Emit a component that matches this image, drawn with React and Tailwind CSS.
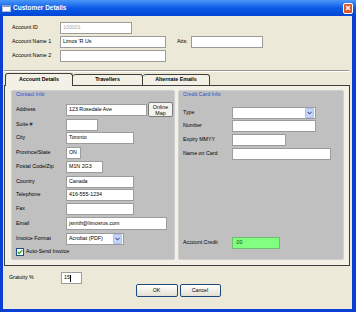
import React from 'react';

function Input({ w, value, muted, className = '' }) {
  return (
    <div className={`h-[12px] shrink-0 bg-white border border-[#9c9c9c] flex items-center px-[2px] whitespace-nowrap overflow-hidden ${muted ? 'text-[#a8a8a8]' : ''} ${w} ${className}`}>
      {value}
    </div>
  );
}

function Select({ w, value }) {
  return (
    <div className={`h-[12px] shrink-0 bg-white border border-[#9c9c9c] flex items-center ${w}`}>
      <span className="flex-1 pl-[2px] whitespace-nowrap overflow-hidden">{value}</span>
      <div className="w-[9px] h-[10px] mr-[1px] rounded-[1px] bg-[#c6d5fb] border border-[#aac0ee] flex items-center justify-center">
        <svg width="5" height="4" viewBox="0 0 5 4">
          <path d="M0.5 0.8 L2.5 2.8 L4.5 0.8" fill="none" stroke="#4d6185" strokeWidth="1.1" />
        </svg>
      </div>
    </div>
  );
}

function Row({ label, lw = 'w-[50px]', className = '', children }) {
  return (
    <div className={`flex items-center ${className}`}>
      <span className={`shrink-0 whitespace-nowrap ${lw}`}>{label}</span>
      {children}
    </div>
  );
}

function XpButton({ w, label }) {
  return (
    <div className={`h-[13px] rounded-[2px] border border-[#1d4a7e] bg-linear-to-b from-white to-[#e3e0d2] flex items-center justify-center ${w}`}>
      {label}
    </div>
  );
}

export default function App() {
  return (
    <div className="w-[356px] h-[312px] flex flex-col bg-[#0b3fd4] font-['Liberation_Sans',Arial,sans-serif] text-[5.3px] text-black leading-none overflow-hidden">
      {/* Title bar */}
      <div className="h-[16px] shrink-0 flex items-center pl-[2px] pr-[3px] bg-linear-to-b from-[#4c97f8] via-[#0a5ae8] to-[#0446d3]">
        <div className="w-[9px] h-[7px] bg-white border border-[#a9b9d8] border-t-2 border-t-[#7f9bd4]" />
        <span className="ml-[2px] text-white font-bold text-[6.5px]">Customer Details</span>
        <div className="ml-auto w-[10px] h-[11px] rounded-[2px] border border-white bg-[#d9572f] flex items-center justify-center">
          <svg width="6" height="6" viewBox="0 0 6 6">
            <path d="M1 1 L5 5 M5 1 L1 5" stroke="white" strokeWidth="1.3" />
          </svg>
        </div>
      </div>

      {/* Body */}
      <div className="flex-1 ml-[3px] mr-[4px] mb-[3px] bg-[#ece9d8] flex flex-col">
        <div className="pt-[6px] pl-[9px] flex flex-col gap-[2px]">
          <Row label="Account ID" lw="w-[48px]">
            <Input w="w-[72px]" value="100001" muted />
          </Row>
          <Row label="Account Name 1" lw="w-[48px]">
            <Input w="w-[106px]" value="Limos 'R Us" />
            <span className="ml-[11px] w-[14px]">Atts:</span>
            <Input w="w-[72px]" value="" />
          </Row>
          <Row label="Account Name 2" lw="w-[48px]">
            <Input w="w-[106px]" value="" />
          </Row>
        </div>

        <div className="mt-[8px] ml-[1px] mr-[3px] h-[2px] border-t border-[#9a978a] border-b border-b-white" />

        {/* Tabs */}
        <div className="mt-[1px] ml-[2px] h-[13px] flex relative z-10">
          <div className="w-[68px] h-[13px] rounded-t-[3px] border border-b-0 border-[#3e3e3e] bg-[#f3f1e6] flex items-center justify-center font-bold">
            Account Details
          </div>
          <div className="w-[70px] h-[12px] mt-[1px] rounded-t-[3px] border border-l-0 border-[#3e3e3e] bg-[#f3f1e6] flex items-center justify-center font-bold">
            Travellers
          </div>
          <div className="w-[67px] h-[12px] mt-[1px] rounded-t-[3px] border border-l-0 border-[#3e3e3e] bg-[#f3f1e6] flex items-center justify-center font-bold">
            Alternate Emails
          </div>
        </div>

        {/* Tab panel */}
        <div className="mt-[-1px] ml-[1px] w-[346px] h-[181px] border border-[#3e3e3e] bg-[#f3f1e6] flex gap-[3px] pt-[4px] pl-[6px] pr-[4px] pb-[5px]">
          {/* Contact Info */}
          <div className="w-[164px] h-[170px] bg-[#c0c0c0] border border-[#cfcfcf] rounded-[2px] flex flex-col pl-[4px]">
            <div className="h-[8px] flex items-center text-[#2c4fd0]">Contact Info</div>
            <Row label="Address" className="mt-[3px] h-[15px]">
              <Input w="w-[81px]" value="123 Rosedale Ave" />
              <div className="ml-[1px] w-[25px] h-[15px] rounded-[2px] border border-[#7a7a7a] bg-[#f4f3ee] flex flex-col items-center justify-center leading-[6px]">
                <span>Online</span>
                <span>Map</span>
              </div>
            </Row>
            <Row label="Suite #" className="mt-[2px]">
              <Input w="w-[32px]" value="" />
            </Row>
            <Row label="City" className="mt-[1px]">
              <Input w="w-[68px]" value="Toronto" />
            </Row>
            <Row label="Province/State" className="mt-[3px]">
              <Input w="w-[15px]" value="ON" />
            </Row>
            <Row label="Postal Code/Zip" className="mt-[2px]">
              <Input w="w-[37px]" value="M1N 2G3" />
            </Row>
            <Row label="Country" className="mt-[3px]">
              <Input w="w-[68px]" value="Canada" />
            </Row>
            <Row label="Telephone" className="mt-[1px]">
              <Input w="w-[68px]" value="416-555-1234" />
            </Row>
            <Row label="Fax" className="mt-[2px]">
              <Input w="w-[68px]" value="" />
            </Row>
            <Row label="Email" className="mt-[2px]">
              <Input w="w-[101px]" value="jsmith@limosrus.com" className="h-[13px]" />
            </Row>
            <Row label="Invoice Format" className="mt-[3px]">
              <Select w="w-[58px]" value="Acrobat (PDF)" />
            </Row>
            <div className="mt-[3px] flex items-center">
              <div className="w-[8px] h-[8px] bg-white border border-[#1c5180] flex items-center justify-center">
                <svg width="6" height="6" viewBox="0 0 6 6">
                  <path d="M0.8 3 L2.3 4.6 L5.2 1.2" fill="none" stroke="#21a121" strokeWidth="1.2" />
                </svg>
              </div>
              <span className="ml-[2px]">Auto-Send Invoice</span>
            </div>
          </div>

          {/* Credit Card Info */}
          <div className="w-[166px] h-[170px] bg-[#c0c0c0] border border-[#cfcfcf] rounded-[2px] flex flex-col pl-[4px]">
            <div className="h-[8px] flex items-center text-[#2c4fd0]">Credit Card Info</div>
            <Row label="Type" lw="w-[49px]" className="mt-[8px]">
              <Select w="w-[84px]" value="" />
            </Row>
            <Row label="Number" lw="w-[49px]" className="mt-[1px]">
              <Input w="w-[84px]" value="" />
            </Row>
            <Row label="Expiry MMYY" lw="w-[49px]" className="mt-[2px]">
              <Input w="w-[54px]" value="" />
            </Row>
            <Row label="Name on Card" lw="w-[49px]" className="mt-[2px]">
              <Input w="w-[99px]" value="" />
            </Row>
            <Row label="Account Credit" lw="w-[49px]" className="mt-auto mb-[10px]">
              <div className="h-[12px] w-[48px] bg-[#80ff80] border border-[#6fbf6f] flex items-center px-[2px] text-[#0a4a0a]">
                .00
              </div>
            </Row>
          </div>
        </div>

        {/* Gratuity */}
        <div className="mt-[6px] pl-[6px] flex items-center">
          <span className="w-[52px]">Gratuity %</span>
          <div className="h-[12px] w-[21px] bg-white border border-[#9c9c9c] flex items-center px-[2px]">
            15<span className="w-px h-[7px] bg-black" />
          </div>
        </div>

        <div className="flex justify-center gap-[2px] pl-[1px]">
          <XpButton w="w-[42px]" label="OK" />
          <XpButton w="w-[41px]" label="Cancel" />
        </div>
      </div>
    </div>
  );
}
